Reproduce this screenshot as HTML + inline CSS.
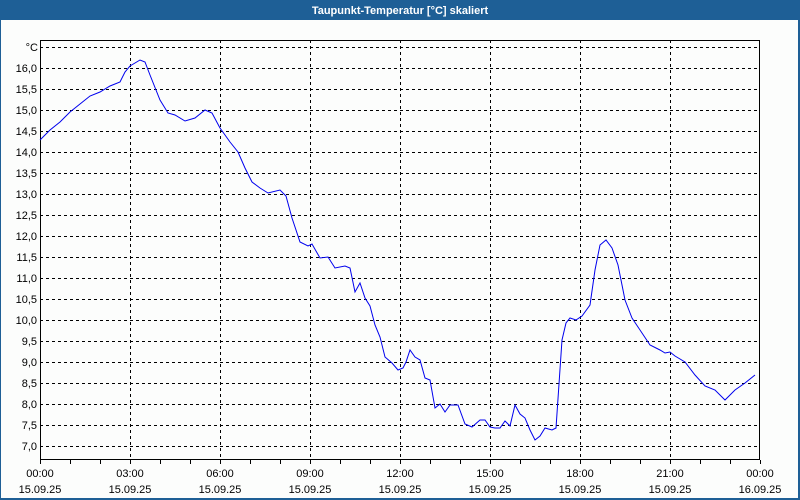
<!DOCTYPE html>
<html><head><meta charset="utf-8"><style>
html,body{margin:0;padding:0;width:800px;height:500px;overflow:hidden;background:#fff}
</style></head><body>
<svg width="800" height="500" xmlns="http://www.w3.org/2000/svg" font-family="Liberation Sans, sans-serif" font-size="11">
<rect x="0" y="0" width="800" height="500" fill="#1e5f96"/>
<rect x="1" y="20" width="797" height="478" fill="#fcfdfc"/>
<text x="400" y="14" fill="#fff" font-weight="bold" text-anchor="middle" font-size="11">Taupunkt-Temperatur [°C] skaliert</text>
<g stroke="#000" stroke-dasharray="3,3" stroke-width="1">
<line x1="40" y1="47.5" x2="760" y2="47.5"/>
<g id="h"></g>
</g>
<g id="grid" stroke="#000" stroke-dasharray="3,3" stroke-width="1"></g>
<g id="labels" fill="#000" text-anchor="end"></g>
<text x="38" y="51" text-anchor="end">°C</text>
<rect x="40.5" y="40.5" width="719" height="419" fill="none" stroke="#000"/>
<g id="ticks" stroke="#000"></g>
<g id="xl" text-anchor="middle"></g>
<polyline fill="none" stroke="#0000ee" stroke-width="1" points="40,140 50,130 60,122 70,112 80,104 90,96 100,92 110,86 120,82 125,72 130,66 140,60 145,62 150,75 160,100 168,113 175,115 185,121 195,118 205,110 212,113 220,128 230,142 238,152 245,168 252,182 260,188 268,193 280,190 286,196 292,218 300,242 308,246 312,244 320,258 328,257 335,268 345,266 350,268 355,292 360,283 365,298 370,306 375,325 380,337 385,357 392,363 398,370 403,368 406,362 410,350 415,357 420,360 425,378 430,380 435,408 440,404 445,412 450,405 458,405 465,424 472,427 480,420 485,420 490,427 495,428 500,428 505,421 510,426 515,405 520,414 525,418 530,430 535,440 540,436 545,428 552,430 556,428 562,340 566,323 570,318 576,320 582,316 590,305 595,270 600,245 606,240 612,248 618,265 625,300 632,318 640,330 650,345 660,350 665,353 670,352 675,356 685,362 695,375 705,386 715,390 725,400 735,390 745,383 755,375"/>
<script>
var ns="http://www.w3.org/2000/svg";
function el(p,t,a,tx){var e=document.createElementNS(ns,t);for(var k in a)e.setAttribute(k,a[k]);if(tx)e.textContent=tx;document.getElementById(p).appendChild(e);}
for(var i=0;i<=18;i++){var v=16-i*0.5,y=68+i*21;el("grid","line",{x1:40,x2:760,y1:y+0.5,y2:y+0.5});el("labels","text",{x:37,y:y+4},v.toFixed(1).replace(".",","));}
var t=["00:00","03:00","06:00","09:00","12:00","15:00","18:00","21:00","00:00"];
for(var j=1;j<8;j++){var x=40+j*90;el("grid","line",{x1:x+0.5,x2:x+0.5,y1:40,y2:460});}
for(var h=0;h<=24;h++){var x=40+h*30+0.5;el("ticks","line",{x1:x,x2:x,y1:460,y2:464});}
for(var j=0;j<9;j++){var x=40+j*90;el("xl","text",{x:x,y:477},t[j]);el("xl","text",{x:x,y:493},j==8?"16.09.25":"15.09.25");}
</script>
</svg>
</body></html>
